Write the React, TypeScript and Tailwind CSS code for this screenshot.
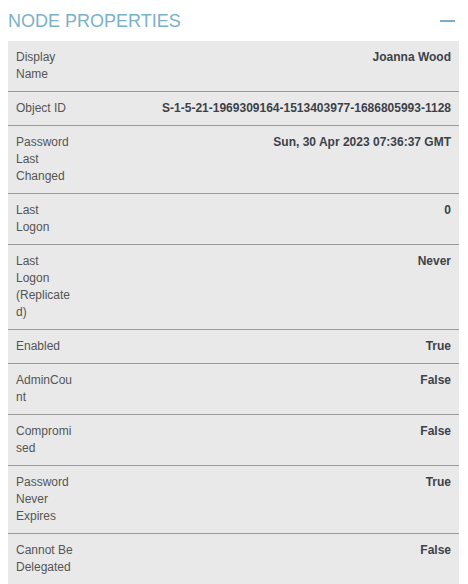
import React from "react";

const rows: [string, string][] = [
  ["Display Name", "Joanna Wood"],
  ["Object ID", "S-1-5-21-1969309164-1513403977-1686805993-1128"],
  ["Password Last Changed", "Sun, 30 Apr 2023 07:36:37 GMT"],
  ["Last Logon", "0"],
  ["Last Logon (Replicated)", "Never"],
  ["Enabled", "True"],
  ["AdminCount", "False"],
  ["Compromised", "False"],
  ["Password Never Expires", "True"],
  ["Cannot Be Delegated", "False"],
];

export default function App() {
  return (
    <div
      className="w-[468px] h-[584px] overflow-hidden bg-white pl-2 pr-[9px]"
      style={{ fontFamily: '"Liberation Sans", Arial, sans-serif' }}
    >
      <div className="flex h-[41px] items-center justify-between">
        <div className="text-[18px] leading-[22px] text-[#7ab1c9] pt-[1px]">NODE PROPERTIES</div>
        <div className="mr-[4px] h-[2px] w-[15px] bg-[#7aaec4]" />
      </div>
      <div className="bg-[#e9e9e9]">
        {rows.map(([k, v], i) => (
          <div
            key={k}
            className={
              "flex px-2 py-2 text-[12px] leading-[17px] " +
              (i < rows.length - 1 ? "border-b border-[#9a9a9a]" : "")
            }
          >
            <div className="w-[58px] shrink-0 text-[#555555] [overflow-wrap:anywhere]">{k}</div>
            <div className="flex-1 text-right font-bold text-[#3d424a]">{v}</div>
          </div>
        ))}
      </div>
    </div>
  );
}
